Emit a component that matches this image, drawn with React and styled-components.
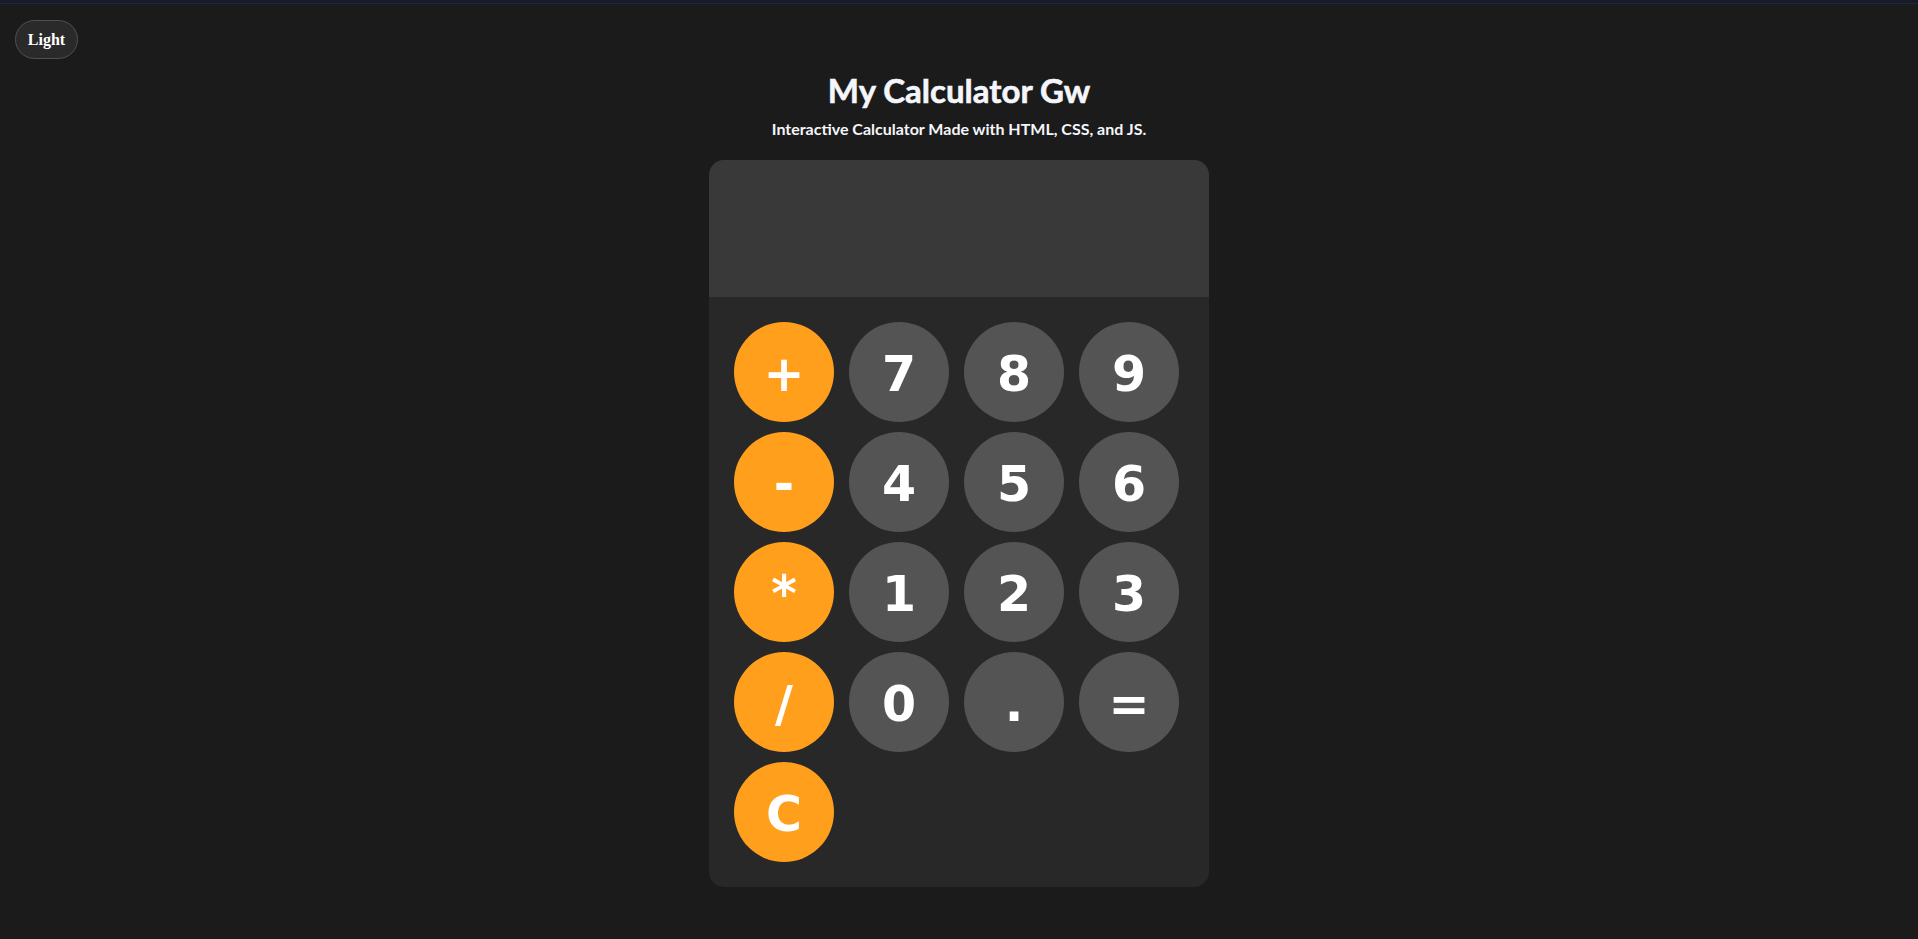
import React from "react";
import styled, { createGlobalStyle } from "styled-components";

const Global = createGlobalStyle`
  html, body {
    margin: 0;
    padding: 0;
    background: #1b1b1b;
    min-height: 100%;
  }
  body {
    font-family: "Liberation Serif", serif;
    color: #ffffff;
  }
`;

const TopStrip = styled.div`
  height: 3px;
  background: #161a2b;
  border-bottom: 1px solid #222839;
`;

const ThemeToggle = styled.button`
  position: absolute;
  top: 20px;
  left: 15px;
  width: 63px;
  height: 39px;
  border-radius: 20px;
  border: 1px solid #505050;
  background: #2a2a2a;
  color: #ffffff;
  font-family: "Liberation Serif", serif;
  font-weight: 700;
  font-size: 16px;
  padding: 0;
  cursor: pointer;
`;

const Page = styled.main`
  display: flex;
  flex-direction: column;
  align-items: center;
`;

const Title = styled.h1`
  margin: 66px 0 0;
  font-family: Lato, "Open Sans", sans-serif;
  font-weight: 700;
  font-size: 33px;
  line-height: 40px;
  color: #f4f6fb;
  -webkit-text-stroke: 0.6px #f4f6fb;
`;

const Subtitle = styled.p`
  margin: 9px 0 0;
  font-family: Lato, "Open Sans", sans-serif;
  font-weight: 700;
  font-size: 16px;
  line-height: 20px;
  color: #f4f6fb;
`;

const Calculator = styled.section`
  margin-top: 21px;
  width: 500px;
  border-radius: 15px;
  overflow: hidden;
  background: #282828;
`;

const Display = styled.div`
  height: 137px;
  background: #393939;
`;

const Keypad = styled.div`
  display: grid;
  grid-template-columns: repeat(4, 100px);
  column-gap: 15px;
  row-gap: 10px;
  padding: 25px 30px 25px 25px;
`;

const Key = styled.button`
  width: 100px;
  height: 100px;
  border-radius: 50%;
  border: none;
  padding: 4px 0 0;
  background: ${(p) => (p.$op ? "#ff9f1c" : "#545454")};
  color: #ffffff;
  font-family: "DejaVu Sans", Verdana, sans-serif;
  font-weight: 700;
  font-size: 49px;
  line-height: 1;
  display: flex;
  align-items: center;
  justify-content: center;
  cursor: pointer;
`;

const keys = [
  ["+", true], ["7"], ["8"], ["9"],
  ["-", true], ["4"], ["5"], ["6"],
  ["*", true], ["1"], ["2"], ["3"],
  ["/", true], ["0"], ["."], ["="],
  ["C", true],
];

export default function App() {
  return (
    <>
      <Global />
      <TopStrip />
      <ThemeToggle>Light</ThemeToggle>
      <Page>
        <Title>My Calculator Gw</Title>
        <Subtitle>Interactive Calculator Made with HTML, CSS, and JS.</Subtitle>
        <Calculator>
          <Display />
          <Keypad>
            {keys.map(([label, op]) => (
              <Key key={label} $op={op}>
                {label}
              </Key>
            ))}
          </Keypad>
        </Calculator>
      </Page>
    </>
  );
}
